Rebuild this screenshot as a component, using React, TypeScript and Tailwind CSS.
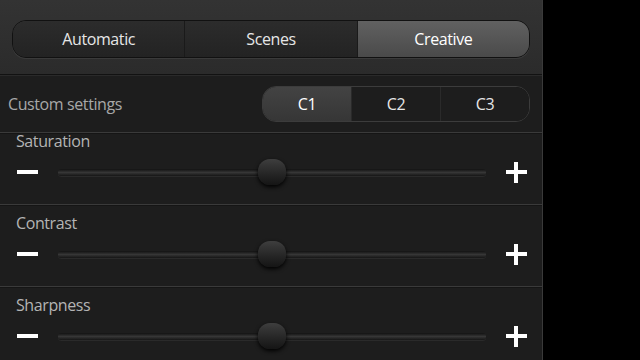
import React from 'react';

const font = { fontFamily: '"Open Sans", "DejaVu Sans", sans-serif' };

const Segmented: React.FC<{ items: string[]; active: number; dark?: boolean; className?: string }> = ({ items, active, dark, className = '' }) => (
  <div
    className={`flex rounded-[14px] border overflow-hidden ${
      dark
        ? 'border-[#3c3c3c] bg-[#1c1c1c] shadow-[inset_0_1px_2px_#000]'
        : 'border-[#111] bg-[#262626] shadow-[0_1px_0_#3a3a3a,inset_0_1px_0_#3a3a3a]'
    } ${className}`}
  >
    {items.map((label, i) => {
      const on = i === active;
      let bg = dark ? 'bg-[#1d1d1d]' : 'bg-gradient-to-b from-[#2c2c2c] to-[#232323]';
      if (on) bg = dark ? 'bg-gradient-to-b from-[#434343] to-[#363636]' : 'bg-gradient-to-b from-[#616161] to-[#4a4a4a]';
      return (
        <div
          key={label}
          className={`flex-1 flex items-center justify-center text-[16px] tracking-[-0.4px] ${on ? 'text-white' : 'text-[#e6e6e6]'} ${
            i > 0 ? (dark ? 'border-l border-[#2a2a2a]' : 'border-l border-[#1a1a1a]') : ''
          } ${bg}`}
        >
          {label}
        </div>
      );
    })}
  </div>
);

const SliderRow: React.FC<{ label: string; value: number; first?: boolean }> = ({ label, value, first }) => (
  <div
    className={`shrink-0 border-t border-[#3a3a3a] shadow-[inset_0_1px_0_#151515] pl-4 pr-[15px] ${
      first ? 'h-[72px] pt-0' : 'h-[82px] pt-[8px]'
    }`}
  >
    <div className={`text-[16px] tracking-[-0.4px] text-[#b4b4b4] leading-[20px] ${first ? '-mt-[2px]' : ''}`}>{label}</div>
    <div className="flex items-center h-[24px] mt-[9px]">
      <div className="w-[21px] h-[4px] bg-white ml-[1px]" />
      <div className="relative flex-1 ml-[20px] mr-[20px] h-[24px] flex items-center">
        <div className="w-full h-[7px] rounded-full bg-gradient-to-b from-[#121212] via-[#363636] to-[#161616] shadow-[0_1px_0_#2a2a2a]" />
        <div
          className="absolute top-0 w-[28px] h-[26px] -translate-x-1/2 -mt-[1px] rounded-[12px] bg-gradient-to-b from-[#3e3e3e] to-[#151515] shadow-[0_2px_4px_#000]"
          style={{ left: `${value}%` }}
        />
      </div>
      <div className="relative w-[21px] h-[21px]">
        <div className="absolute left-0 top-[8px] w-[21px] h-[4px] bg-white" />
        <div className="absolute top-0 left-[8px] w-[4px] h-[21px] bg-white" />
      </div>
    </div>
  </div>
);

export default function App() {
  return (
    <div className="w-[640px] h-[360px] bg-black flex overflow-hidden" style={font}>
      <div className="w-[543px] h-full bg-[#1d1d1d] border-r border-[#3a3a3a] flex flex-col">
        <div className="shrink-0 h-[75px] bg-gradient-to-b from-[#333] to-[#2b2b2b] border-b border-[#121212] pt-[20px] px-[12px]">
          <Segmented items={['Automatic', 'Scenes', 'Creative']} active={2} className="h-[38px]" />
        </div>
        <div className="shrink-0 h-[57px] flex items-center pl-[8px] pr-[12px] border-t border-[#2a2a2a]">
          <div className="flex-1 text-[16px] tracking-[-0.4px] text-[#a8a8a8]">Custom settings</div>
          <Segmented items={['C1', 'C2', 'C3']} active={0} dark className="w-[268px] h-[36px]" />
        </div>
        <SliderRow label="Saturation" value={50} first />
        <SliderRow label="Contrast" value={50} />
        <SliderRow label="Sharpness" value={50} />
      </div>
    </div>
  );
}
